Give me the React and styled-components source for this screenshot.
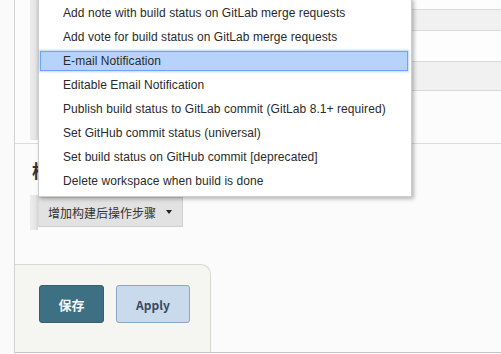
import React from "react";
import styled, { createGlobalStyle } from "styled-components";

const Global = createGlobalStyle`
  html, body { margin: 0; padding: 0; background: #fafafa; }
  body { font-family: "Liberation Sans", Arial, sans-serif; }
  * { box-sizing: border-box; }
`;

const Page = styled.div`
  width: 501px;
  height: 354px;
  padding-left: 14px;
  overflow: hidden;
  background: #fafafa;
`;

const Panel = styled.div`
  position: relative;
  height: 353px;
  border-left: 1px solid #d2d2d2;
  border-bottom: 1px solid #c4c4c4;
  background: #fbfbfb;
  display: flex;
  flex-direction: column;
`;

const UpperSection = styled.div`
  display: flex;
  height: 144px;
  padding-left: 15px;
  border-bottom: 1px solid #dcdcdc;
  background: #fcfcfc;
`;

const IndentBar = styled.div`
  width: 8px;
  height: ${(p) => p.$h}px;
  background: linear-gradient(to right, #ececec 0, #e6e6e6 60%, #d6d6d6 100%);
  flex: none;
`;

const Rows = styled.div`
  flex: 1;
  display: flex;
  flex-direction: column;
`;

const Row = styled.div`
  height: ${(p) => p.$h}px;
  background: ${(p) => (p.$shade ? "#f1f1f1" : "#fdfdfd")};
  border-bottom: 1px solid #d9d9d9;
`;

const SectionHeader = styled.div`
  height: 51px;
  padding-left: 17px;
  display: flex;
  align-items: center;
  font-family: "Noto Sans CJK SC", sans-serif;
  font-weight: bold;
  font-size: 18px;
  color: #333;
`;

const IndentRow = styled.div`
  display: flex;
  height: 35px;
  padding-left: 15px;
`;

const AddButton = styled.div`
  margin-top: 2px;
  height: 30px;
  width: 145px;
  display: flex;
  align-items: center;
  gap: 8px;
  padding-left: 9px;
  background: #e2e2e2;
  border: 1px solid #cfcfcf;
  border-left-color: #d9d9d9;
  font-family: "Noto Sans CJK SC", sans-serif;
  font-size: 12px;
  color: #333;
`;

const Caret = styled.span`
  width: 0;
  height: 0;
  border-left: 3.5px solid transparent;
  border-right: 3.5px solid transparent;
  border-top: 4px solid #222;
  margin-left: 2px;
`;

const Spacer = styled.div`
  height: 34px;
`;

const SaveBar = styled.div`
  width: 196px;
  height: 88px;
  background: #f5f6f1;
  border-top: 1px solid #d5dbcd;
  border-right: 1px solid #d5dbcd;
  border-top-right-radius: 10px;
  display: flex;
  gap: 12px;
  padding: 20px 0 0 24px;
`;

const Btn = styled.button`
  height: 38px;
  width: ${(p) => p.$w}px;
  border-radius: 3px;
  font-family: "Noto Sans CJK SC", "Liberation Sans", sans-serif;
  font-weight: bold;
  font-size: ${(p) => (p.$primary ? 13 : 12)}px;
  padding: 0;
  background: ${(p) => (p.$primary ? "#3e7084" : "#c8daec")};
  color: ${(p) => (p.$primary ? "#f3f6f8" : "#3c4a5c")};
  border: 1px solid ${(p) => (p.$primary ? "#34606f" : "#88a6c6")};
`;

const Menu = styled.div`
  position: absolute;
  left: 23px;
  top: -2px;
  width: 374px;
  display: flex;
  flex-direction: column;
  background: #fff;
  border: 1px solid #cdcdcd;
  padding: 2px 0 3px;
  box-shadow: 2px 2px 4px rgba(0, 0, 0, 0.28);
`;

const Item = styled.div`
  height: 20px;
  margin: 2px 3px 2px 1px;
  padding-left: 22px;
  display: flex;
  align-items: center;
  font-size: 12px;
  letter-spacing: 0.07px;
  color: #2a2a2a;
  white-space: nowrap;
  border: 1px solid ${(p) => (p.$active ? "#6ea4f2" : "transparent")};
  background: ${(p) => (p.$active ? "#b6d4fb" : "transparent")};
  box-shadow: ${(p) => (p.$active ? "0 0 2px 1px rgba(120,170,240,0.5)" : "none")};
`;

const items = [
  "Add note with build status on GitLab merge requests",
  "Add vote for build status on GitLab merge requests",
  "E-mail Notification",
  "Editable Email Notification",
  "Publish build status to GitLab commit (GitLab 8.1+ required)",
  "Set GitHub commit status (universal)",
  "Set build status on GitHub commit [deprecated]",
  "Delete workspace when build is done",
];

export default function App() {
  return (
    <>
      <Global />
      <Page>
        <Panel>
          <UpperSection>
            <IndentBar $h={140} />
            <Rows>
              <Row $h={10} />
              <Row $h={21} $shade />
              <Row $h={31} />
              <Row $h={29} $shade />
            </Rows>
          </UpperSection>
          <SectionHeader>构建后操作</SectionHeader>
          <IndentRow>
            <IndentBar $h={35} />
            <AddButton>
              增加构建后操作步骤
              <Caret />
            </AddButton>
          </IndentRow>
          <Spacer />
          <SaveBar>
            <Btn $primary $w={65}>保存</Btn>
            <Btn $w={74}>Apply</Btn>
          </SaveBar>
          <Menu>
            {items.map((t, i) => (
              <Item key={t} $active={i === 2}>
                {t}
              </Item>
            ))}
          </Menu>
        </Panel>
      </Page>
    </>
  );
}
